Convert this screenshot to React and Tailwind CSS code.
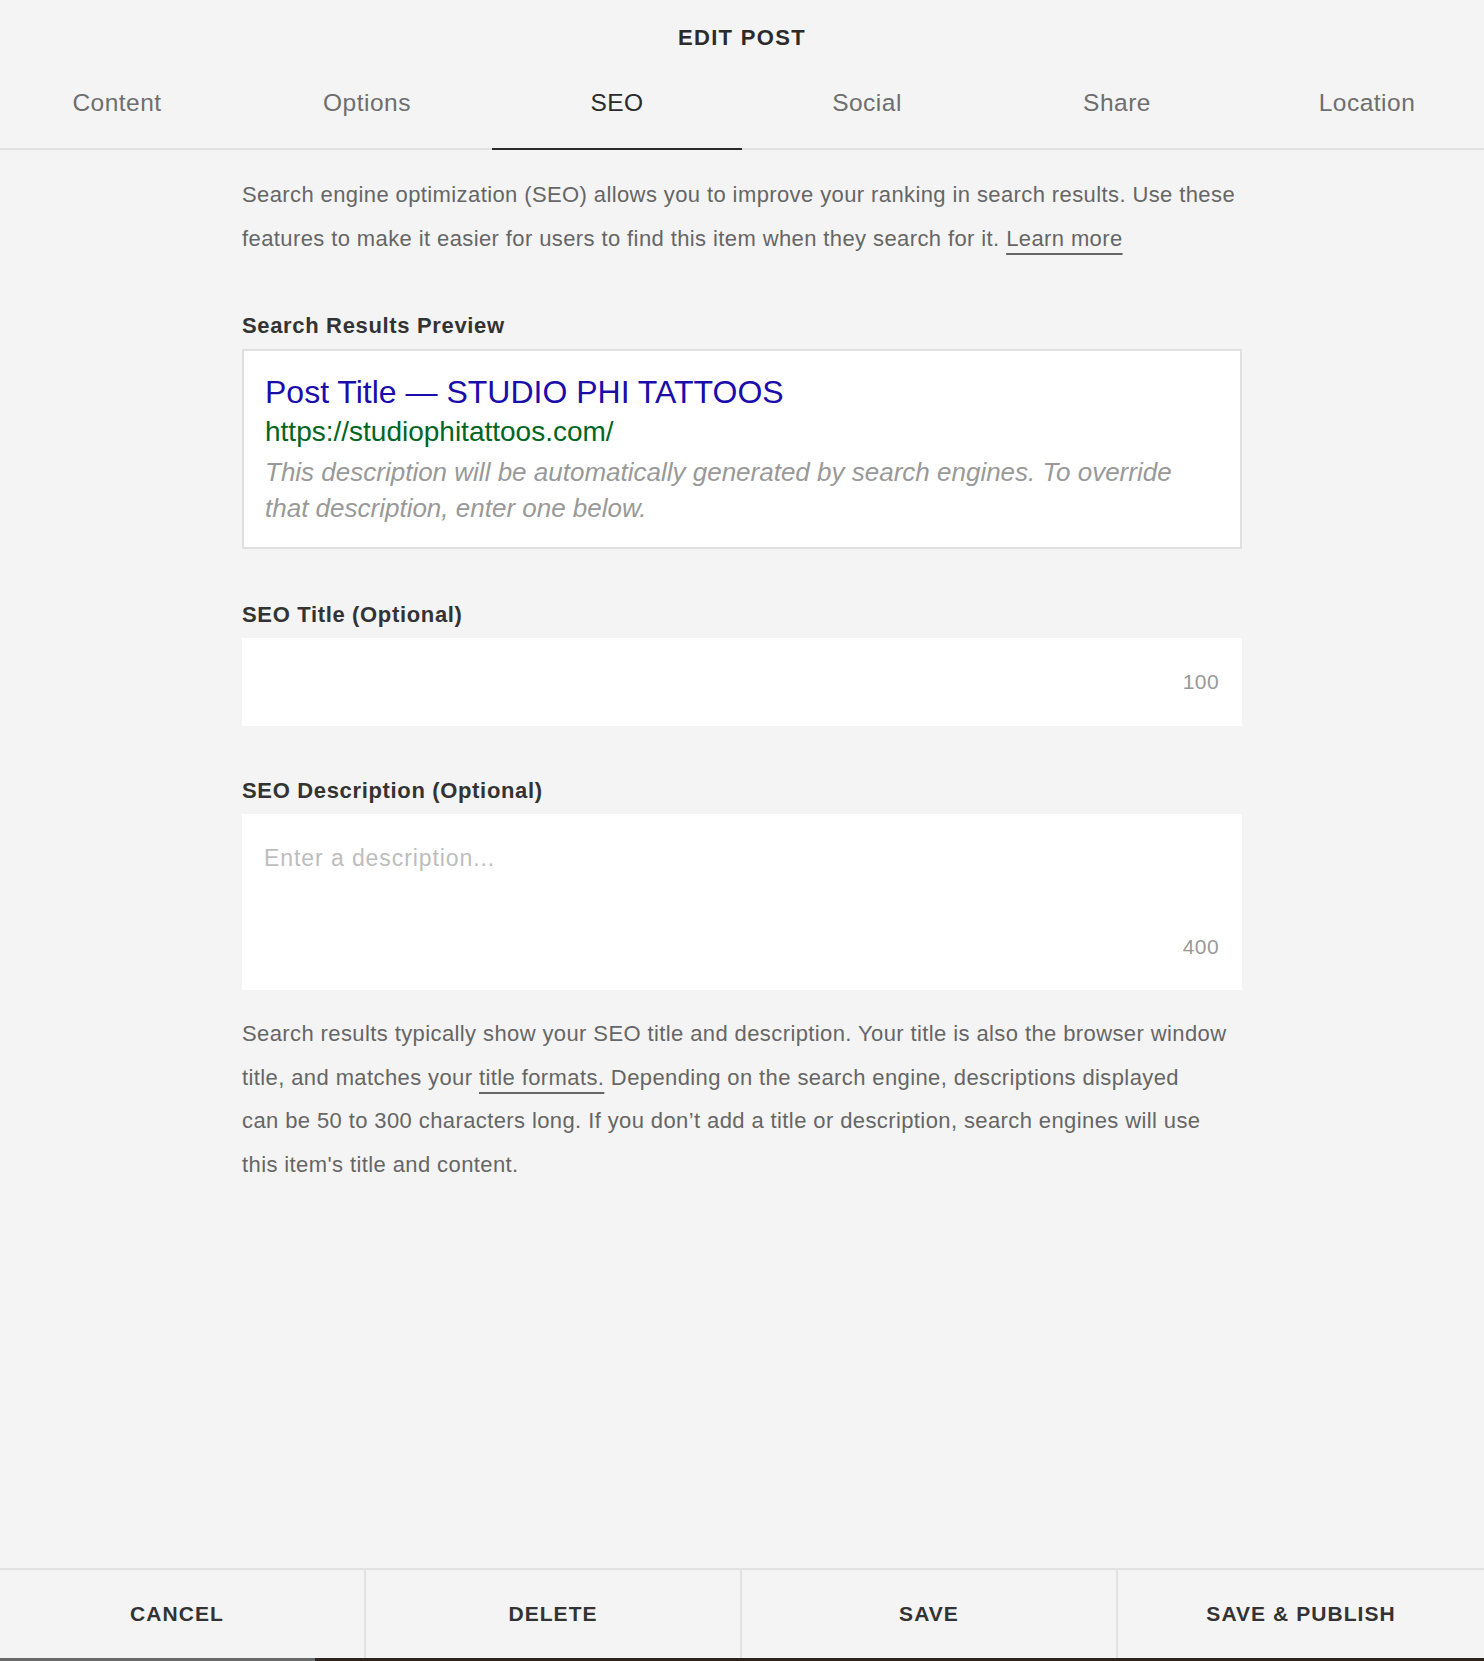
import { useState } from 'react';

const tabs = ['Content', 'Options', 'SEO', 'Social', 'Share', 'Location'];
const actions = [
    { label: 'CANCEL', w: 'w-[364px] pr-[10px]' },
    { label: 'DELETE', w: 'w-[376px]' },
    { label: 'SAVE', w: 'w-[376px]' },
    { label: 'SAVE & PUBLISH', w: 'flex-1' },
];

const App = () => {
    const [activeTab, setActiveTab] = useState('SEO');
    const [seoTitle, setSeoTitle] = useState('');
    const [seoDescription, setSeoDescription] = useState('');

    return (
        <div className="min-h-[1661px] bg-[#f4f4f4] flex flex-col font-['Liberation_Sans',Arial,sans-serif] text-[#333]">
            {/* header */}
            <div className="h-[74px] flex items-center justify-center">
                <h1 className="text-[22px] font-bold tracking-[0.06em] text-[#2b2b2b]">EDIT POST</h1>
            </div>

            {/* tabs - 6 x 250px, wider than the window so they spill evenly */}
            <div className="h-[76px] overflow-hidden">
                <div className="flex justify-center h-[76px] border-b-2 border-[#e2e2e2]">
                    {tabs.map((tab) => (
                        <button
                            key={tab}
                            onClick={() => setActiveTab(tab)}
                            className={`w-[250px] shrink-0 -mb-[2px] pt-[16px] flex justify-center items-start text-[24.5px] leading-[26px] tracking-[0.02em] border-b-2 ${
                                activeTab === tab ? 'border-[#2b2b2b] text-[#2b2b2b]' : 'border-transparent text-[#6e6e6e]'
                            }`}
                        >
                            {tab}
                        </button>
                    ))}
                </div>
            </div>

            {/* body */}
            <div className="flex-1 w-[1000px] mx-auto pt-[23px]">
                <p className="text-[22px] leading-[43.5px] tracking-[0.018em] text-[#666]">
                    Search engine optimization (SEO) allows you to improve your ranking in search results. Use these
                    <br />
                    features to make it easier for users to find this item when they search for it.{' '}
                    <a href="#" className="underline underline-offset-[7px] decoration-[1.5px]">Learn more</a>
                </p>

                <h3 className="mt-[54px] text-[22px] leading-[24px] font-bold tracking-[0.03em] text-[#333]">Search Results Preview</h3>
                <div className="mt-[11px] bg-white border-2 border-[#e0e0e0] px-[21px] pt-[23px] pb-[21px]">
                    <div className="text-[32px] leading-[36px] text-[#1a0dab]">Post Title — STUDIO PHI TATTOOS</div>
                    <div className="text-[28px] leading-[44px] text-[#006621]">https://studiophitattoos.com/</div>
                    <div className="text-[26px] leading-[36px] italic text-[#999]">
                        This description will be automatically generated by search engines. To override
                        <br />
                        that description, enter one below.
                    </div>
                </div>

                <h3 className="mt-[54px] text-[22px] leading-[24px] font-bold tracking-[0.03em] text-[#333]">SEO Title (Optional)</h3>
                <div className="mt-[11px] h-[88px] bg-white flex items-center pl-[22px] pr-[23px]">
                    <input
                        value={seoTitle}
                        onChange={(e) => setSeoTitle(e.target.value)}
                        className="flex-1 bg-transparent outline-none text-[22px]"
                    />
                    <span className="text-[21px] tracking-[0.02em] text-[#999]">{100 - seoTitle.length}</span>
                </div>

                <h3 className="mt-[53px] text-[22px] leading-[24px] font-bold tracking-[0.03em] text-[#333]">SEO Description (Optional)</h3>
                <div className="mt-[11px] h-[176px] bg-white flex flex-col pl-[22px] pr-[23px] pt-[31px] pb-[31px]">
                    <textarea
                        value={seoDescription}
                        onChange={(e) => setSeoDescription(e.target.value)}
                        placeholder="Enter a description..."
                        className="flex-1 resize-none bg-transparent outline-none text-[23px] leading-[26px] tracking-[0.04em] placeholder-[#bdbdbd]"
                    />
                    <span className="self-end text-[21px] leading-[24px] tracking-[0.02em] text-[#999]">{400 - seoDescription.length}</span>
                </div>

                <p className="mt-[22px] text-[22px] leading-[43.5px] tracking-[0.018em] text-[#666]">
                    Search results typically show your SEO title and description. Your title is also the browser window
                    <br />
                    title, and matches your{' '}
                    <a href="#" className="underline underline-offset-[7px] decoration-[1.5px]">title formats.</a>{' '}
                    Depending on the search engine, descriptions displayed
                    <br />
                    can be 50 to 300 characters long. If you don’t add a title or description, search engines will use
                    <br />
                    this item's title and content.
                </p>
            </div>

            {/* footer actions */}
            <div className="flex h-[90px] border-t-2 border-[#e2e2e2]">
                {actions.map((a, i) => (
                    <button
                        key={a.label}
                        className={`${a.w} flex items-center justify-center text-[21px] font-bold tracking-[0.05em] text-[#333] ${i > 0 ? 'border-l-2 border-[#e2e2e2]' : ''}`}
                    >
                        {a.label}
                    </button>
                ))}
            </div>
            <div className="flex h-[3px]">
                <div className="w-[315px] bg-[#6a6a6a]" />
                <div className="flex-1 bg-[#2e241f]" />
            </div>
        </div>
    );
};

export default App;
